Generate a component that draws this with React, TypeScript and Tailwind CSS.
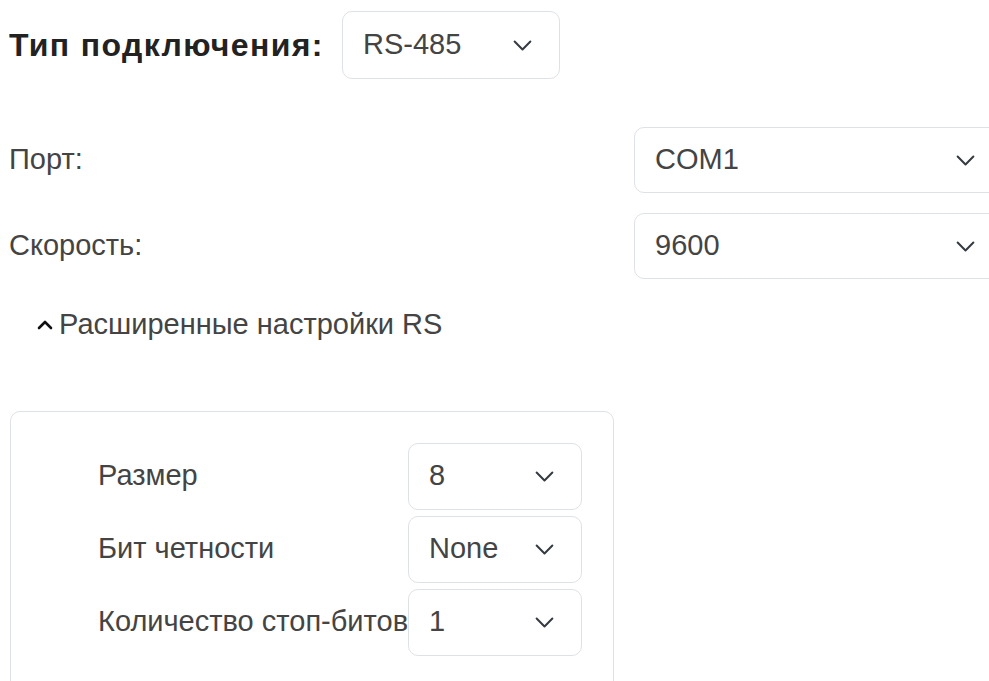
const chevronDown = 'm2 5 6 6 6-6'

function Chevron() {
  return (
    <svg width="21" height="21" viewBox="0 0 16 16" fill="none" className="shrink-0">
      <path d={chevronDown} stroke="#343a40" strokeWidth="1.5" strokeLinecap="round" strokeLinejoin="round" />
    </svg>
  )
}

function Select({ value, className = '' }: { value: string; className?: string }) {
  return (
    <div
      className={`flex items-center justify-between pl-[20px] border border-[#dee2e6] rounded-[10px] bg-white text-[29px] text-[#444] ${className}`}
    >
      <span>{value}</span>
      <Chevron />
    </div>
  )
}

const advanced = [
  { label: 'Размер', value: '8' },
  { label: 'Бит четности', value: 'None' },
  { label: 'Количество стоп-битов', value: '1' },
]

export default function App() {
  return (
    <div className="w-[989px] h-[681px] overflow-hidden bg-white font-['Liberation_Sans',Arial,sans-serif] text-[#444]">
      <div className="w-[1004px]">
        {/* connection type */}
        <div className="flex items-center gap-[18px] pl-[9px] pt-[11px]">
          <span className="text-[32px] font-bold tracking-[1.4px] text-[#222]">Тип подключения:</span>
          <Select value="RS-485" className="w-[218px] h-[68px] pr-[26px]" />
        </div>

        {/* port settings */}
        <div className="flex flex-col gap-[20px] mt-[48px]">
          <div className="flex items-center">
            <span className="flex-1 pl-[9px] text-[29px]">Порт:</span>
            <Select value="COM1" className="w-[370px] h-[66px] pr-[27px]" />
          </div>
          <div className="flex items-center">
            <span className="flex-1 pl-[9px] text-[29px]">Скорость:</span>
            <Select value="9600" className="w-[370px] h-[66px] pr-[27px]" />
          </div>
        </div>

        {/* advanced toggle */}
        <div className="flex items-center gap-[6px] pl-[37px] mt-[24px] text-[29px]">
          <svg width="16" height="16" viewBox="0 0 16 16" fill="none">
            <path d="m2 11 6-6 6 6" stroke="#111" strokeWidth="2.6" strokeLinecap="round" strokeLinejoin="round" />
          </svg>
          <span>Расширенные настройки RS</span>
        </div>

        <div className="ml-[10px] mt-[64px] w-[604px] border border-[#dee2e6] rounded-[10px] pt-[31px] pl-[87px] pb-[40px]">
          <div className="grid grid-cols-[auto_174px] gap-y-[6px] w-fit">
            {advanced.map((row) => (
              <div key={row.label} className="contents">
                <span className="flex items-center text-[29px]">{row.label}</span>
                <Select value={row.value} className="h-[67px] pr-[26px]" />
              </div>
            ))}
          </div>
        </div>
      </div>
    </div>
  )
}
